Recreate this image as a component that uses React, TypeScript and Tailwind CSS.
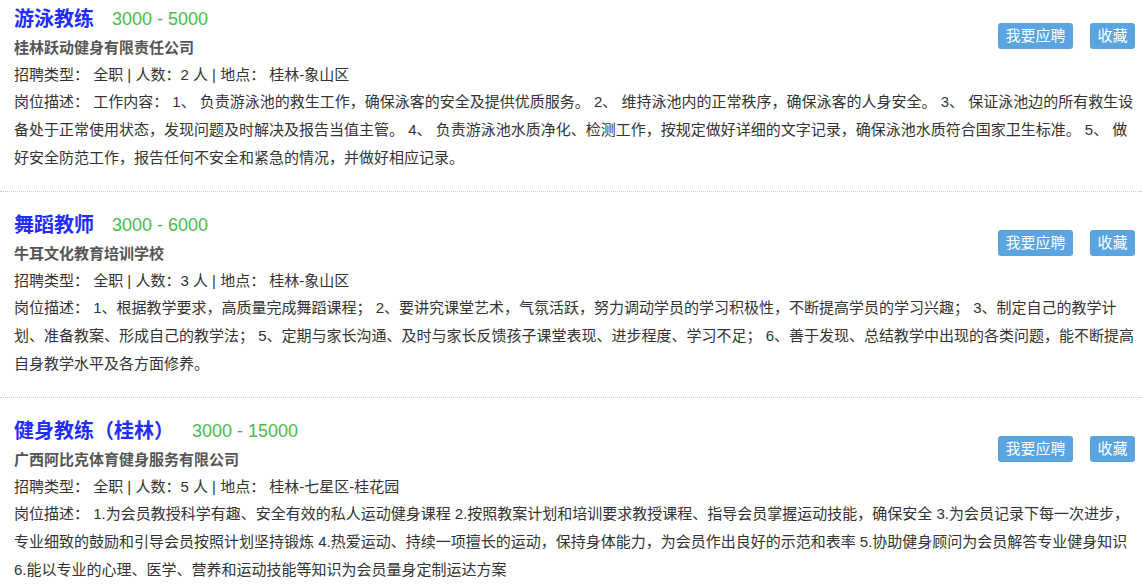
import React from "react";

type Job = {
  title: string;
  salary: string;
  company: string;
  count: string;
  place: string;
  desc: string;
};

const jobs: Job[] = [
  {
    title: "游泳教练",
    salary: "3000 - 5000",
    company: "桂林跃动健身有限责任公司",
    count: "2",
    place: "桂林-象山区",
    desc: "岗位描述： 工作内容： 1、 负责游泳池的救生工作，确保泳客的安全及提供优质服务。 2、 维持泳池内的正常秩序，确保泳客的人身安全。 3、 保证泳池边的所有救生设备处于正常使用状态，发现问题及时解决及报告当值主管。 4、 负责游泳池水质净化、检测工作，按规定做好详细的文字记录，确保泳池水质符合国家卫生标准。 5、 做好安全防范工作，报告任何不安全和紧急的情况，并做好相应记录。",
  },
  {
    title: "舞蹈教师",
    salary: "3000 - 6000",
    company: "牛耳文化教育培训学校",
    count: "3",
    place: "桂林-象山区",
    desc: "岗位描述： 1、根据教学要求，高质量完成舞蹈课程； 2、要讲究课堂艺术，气氛活跃，努力调动学员的学习积极性，不断提高学员的学习兴趣； 3、制定自己的教学计划、准备教案、形成自己的教学法； 5、定期与家长沟通、及时与家长反馈孩子课堂表现、进步程度、学习不足； 6、善于发现、总结教学中出现的各类问题，能不断提高自身教学水平及各方面修养。",
  },
  {
    title: "健身教练（桂林）",
    salary: "3000 - 15000",
    company: "广西阿比克体育健身服务有限公司",
    count: "5",
    place: "桂林-七星区-桂花园",
    desc: "岗位描述： 1.为会员教授科学有趣、安全有效的私人运动健身课程 2.按照教案计划和培训要求教授课程、指导会员掌握运动技能，确保安全 3.为会员记录下每一次进步，专业细致的鼓励和引导会员按照计划坚持锻炼 4.热爱运动、持续一项擅长的运动，保持身体能力，为会员作出良好的示范和表率 5.协助健身顾问为会员解答专业健身知识 6.能以专业的心理、医学、营养和运动技能等知识为会员量身定制运达方案",
  },
];

function JobItem({ job, first, last }: { job: Job; first: boolean; last: boolean }) {
  return (
    <div
      className={
        "relative pl-[14px] pr-[4px] " +
        (first ? "pt-[6px] " : "pt-[20px] ") +
        (last ? "pb-[19px]" : "pb-[19px] border-b border-dotted border-[#c8c8c8]")
      }
    >
      <div className="flex items-center h-[26px]">
        <span className="text-[20px] leading-[26px] font-bold text-[#1f2dff]">{job.title}</span>
        <span className="ml-[18px] text-[18px] leading-[26px] text-[#4cbb4c]">{job.salary}</span>
      </div>
      <div className="h-[4px]" />
      <div className="text-[15px] leading-[24px] font-bold text-[#555555]">{job.company}</div>
      <div className="h-[2px]" />
      <div className="text-[15px] leading-[26px] text-[#333333]">
        招聘类型： 全职 | 人数：{job.count} 人 | 地点： {job.place}
      </div>
      <div className="text-[15px] leading-[28px] text-[#333333]">{job.desc}</div>
      <div
        className={
          "absolute right-[7px] flex gap-[17px] " + (first ? "top-[23px]" : "top-[38px]")
        }
      >
        <button className="h-[26px] w-[75px] rounded-[3px] bg-[#5aa4e2] text-white text-[15px] leading-[26px] text-center">
          我要应聘
        </button>
        <button className="h-[26px] w-[45px] rounded-[3px] bg-[#5aa4e2] text-white text-[15px] leading-[26px] text-center">
          收藏
        </button>
      </div>
    </div>
  );
}

export default function App() {
  return (
    <div
      className="w-[1142px] h-[586px] overflow-hidden bg-white"
      style={{ fontFamily: '"Liberation Sans", "Noto Sans CJK SC", sans-serif' }}
    >
      {jobs.map((j, i) => (
        <JobItem key={i} job={j} first={i === 0} last={i === jobs.length - 1} />
      ))}
    </div>
  );
}
